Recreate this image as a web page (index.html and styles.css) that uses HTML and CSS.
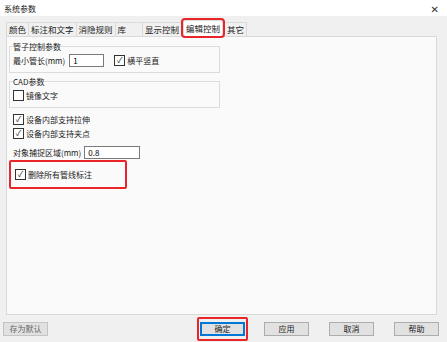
FILE: index.html
```html
<!DOCTYPE html>
<html lang="zh-CN">
<head>
    <meta charset="UTF-8">
    <title>系统参数</title>
    <link rel="stylesheet" href="styles.css">
</head>
<body>
    <div class="dialog">
        <div class="titlebar">
            <span class="title">系统参数</span>
            <span class="close">&#x2715;</span>
        </div>
        <div class="content">
            <div class="tabs">
                <span class="tab">颜色</span>
                <span class="tab">标注和文字</span>
                <span class="tab">消隐规则</span>
                <span class="tab tab-wide">库</span>
                <span class="tab">显示控制</span>
                <span class="tab active">编辑控制</span>
                <span class="tab">其它</span>
            </div>
            <div class="panel">
                <fieldset class="group">
                    <legend>管子控制参数</legend>
                    <div class="row">
                        <label>最小管长(mm)</label>
                        <input class="field short" type="text" value="1">
                        <span class="check checked">横平竖直</span>
                    </div>
                </fieldset>
                <fieldset class="group">
                    <legend>CAD参数</legend>
                    <div class="row">
                        <span class="check">镜像文字</span>
                    </div>
                </fieldset>
                <div class="opts">
                    <span class="check checked">设备内部支持拉伸</span>
                    <span class="check checked">设备内部支持夹点</span>
                    <div class="row">
                        <label>对象捕捉区域(mm)</label>
                        <input class="field" type="text" value="0.8">
                    </div>
                </div>
                <div class="highlight">
                    <span class="check checked">删除所有管线标注</span>
                </div>
            </div>
            <div class="footer">
                <button class="btn faded">存为默认</button>
                <div class="actions">
                    <span class="marked"><button class="btn primary">确定</button></span>
                    <button class="btn">应用</button>
                    <button class="btn">取消</button>
                    <button class="btn">帮助</button>
                </div>
            </div>
        </div>
    </div>
</body>
</html>
```

FILE: styles.css
```css
* {
    box-sizing: border-box;
}
body {
    margin: 0;
    font-family: "Noto Sans CJK SC", "DejaVu Sans", sans-serif;
    font-size: 8px;
    color: #1a1a1a;
    background: #f0f0f0;
}
.dialog {
    width: 447px;
    height: 342px;
    display: flex;
    flex-direction: column;
}
.titlebar {
    height: 17px;
    background: #fff;
    display: flex;
    align-items: center;
    justify-content: space-between;
    padding: 0 8px 0 4px;
}
.close {
    font-size: 10px;
    color: #333;
}
.content {
    flex: 1;
    padding: 3px 8px 0 6px;
    display: flex;
    flex-direction: column;
}
.tabs {
    display: flex;
    align-items: flex-end;
    height: 17px;
    font-size: 8.5px;
}
.tab {
    height: 14px;
    line-height: 13px;
    padding: 0 2px;
    border: 1px solid #dadada;
    border-bottom: none;
    margin-right: -1px;
    background: #f0f0f0;
    color: #222;
}
.tab-wide {
    padding-right: 16px;
}
.tab.active {
    height: 16px;
    line-height: 15px;
    padding: 0 2px;
    background: #fff;
    outline: 2px solid #e8262a;
    border-radius: 2px;
    margin: 0 1px 0 2px;
    position: relative;
    z-index: 1;
}
.panel {
    height: 279px;
    background: #fafafa;
    border: 1px solid #d9d9d9;
    padding: 4px 3px 0 2px;
    margin-right: 2px;
}
.group {
    width: 211px;
    margin: 0 0 3px 0;
    padding: 2px 3px 5px;
    border: 1px solid #dcdcdc;
}
.group legend {
    padding: 0;
    margin-left: 0;
}
.row {
    display: flex;
    align-items: center;
    gap: 4px;
}
.field {
    width: 56px;
    height: 13px;
    border: 1px solid #7a7a7a;
    background: #fff;
    font: inherit;
    padding: 0 3px;
}
.field.short {
    width: 35px;
    margin-right: 6px;
}
.check {
    display: inline-flex;
    align-items: center;
    height: 13px;
}
.check::before {
    content: "";
    width: 9px;
    height: 9px;
    border: 1px solid #333;
    background: #fff;
    margin-right: 2px;
    font-size: 8px;
    line-height: 8px;
    text-align: center;
}
.check.checked::before {
    content: "\2713";
}
.opts {
    display: flex;
    flex-direction: column;
    gap: 1px;
    padding: 2px 4px 0;
}
.opts .row {
    margin-top: 5px;
    gap: 3px;
}
.highlight {
    width: 118px;
    height: 29px;
    margin: 1px 0 0 0;
    border: 2px solid #e8262a;
    border-radius: 2px;
    display: flex;
    align-items: center;
    padding-left: 4px;
}
.footer {
    display: flex;
    justify-content: space-between;
    align-items: center;
    height: 27px;
    margin-left: -3px;
}
.actions {
    display: flex;
    gap: 20px;
    align-items: center;
}
.btn {
    width: 45px;
    height: 14px;
    border: 1px solid #adadad;
    background: #e1e1e1;
    font: inherit;
    padding: 0;
    color: #222;
}
.btn.faded {
    color: #666;
    border-color: #c4c4c4;
}
.btn.primary {
    border: 1px solid #0078d7;
    box-shadow: inset 0 0 0 1px #0078d7;
}
.marked {
    padding: 3px 1px;
    border: 2px solid #e8262a;
    border-radius: 2px;
    display: flex;
    margin-right: -4px;
}
```
